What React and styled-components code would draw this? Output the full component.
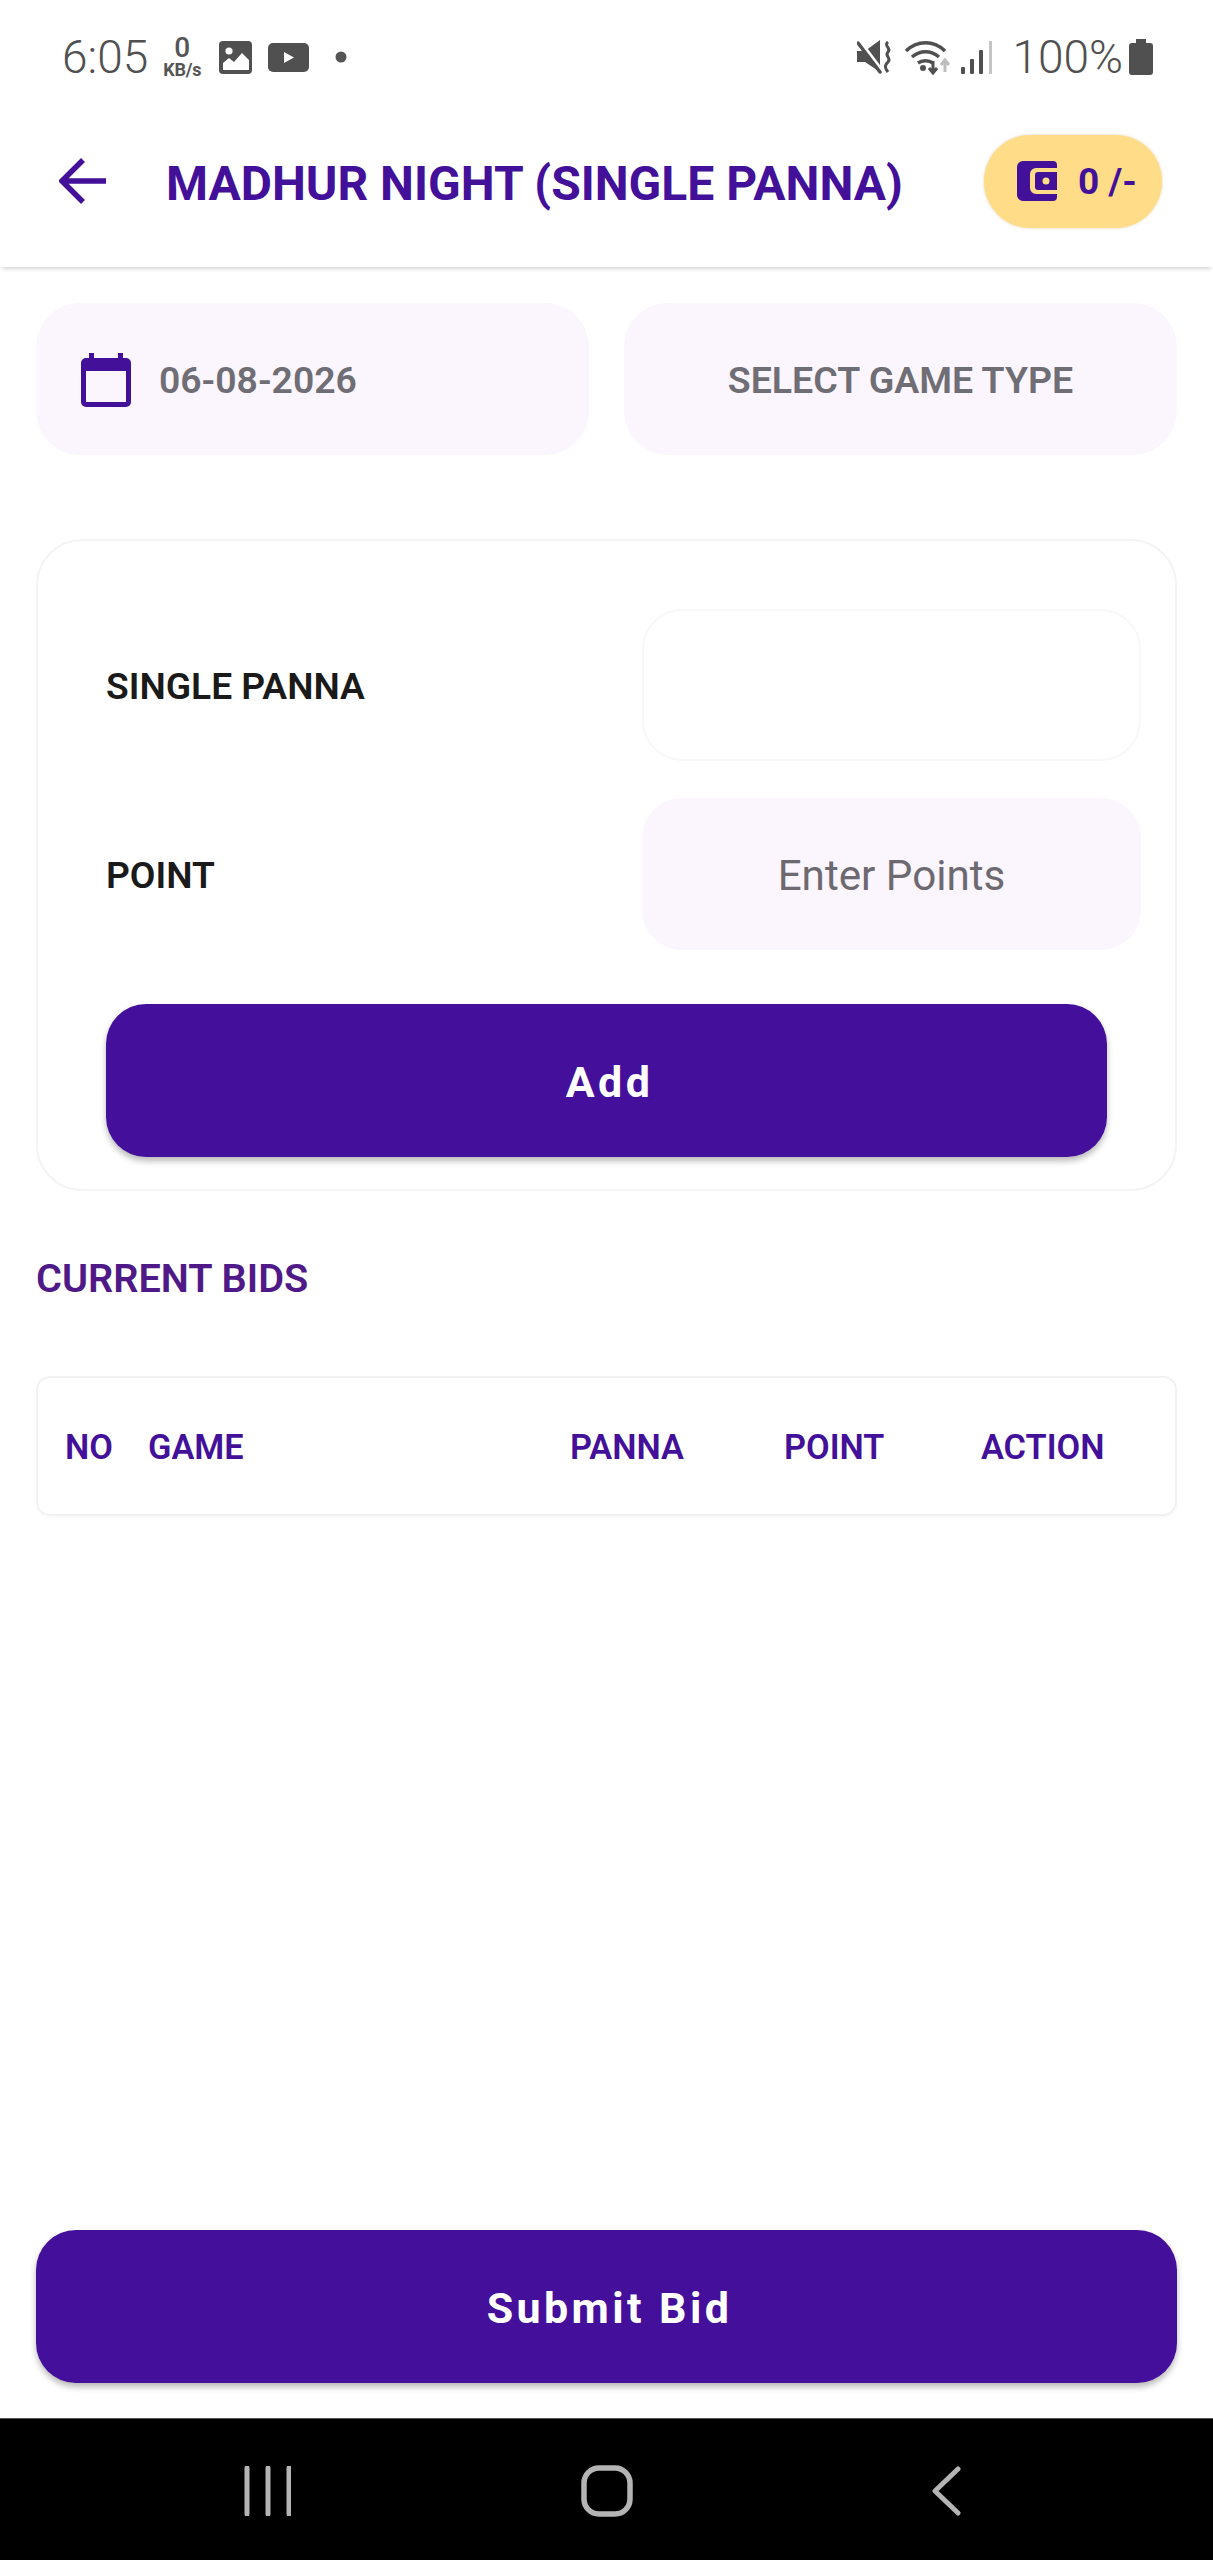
import styled, { createGlobalStyle } from "styled-components";

const PURPLE = "#43109a";

const GlobalStyle = createGlobalStyle`
  html, body {
    margin: 0;
    padding: 0;
    background: #fff;
    font-family: Roboto, "Liberation Sans", sans-serif;
  }
  * {
    box-sizing: border-box;
  }
`;

const Page = styled.div`
  width: 1213px;
  height: 2560px;
  display: flex;
  flex-direction: column;
  overflow: hidden;
  background: #fff;
`;

const StatusBar = styled.div`
  height: 115px;
  padding: 34px 60px 0 62px;
  display: flex;
  justify-content: space-between;
  align-items: flex-start;
  color: #555;
`;

const StatusGroup = styled.div`
  display: flex;
  align-items: center;
  height: 46px;
`;

const StatusText = styled.span`
  font-size: 46px;
  line-height: 46px;
  font-weight: 300;
  color: #505050;
  margin-left: ${(p) => p.$left || 0}px;
`;

const Speed = styled.div`
  width: 42px;
  margin: 0 16px 0 13px;
  display: flex;
  flex-direction: column;
  align-items: center;
  color: #555;
  font-weight: 500;
`;

const SpeedValue = styled.span`
  font-size: 28px;
  line-height: 26px;
`;

const SpeedUnit = styled.span`
  font-size: 18px;
  line-height: 18px;
  font-weight: 700;
  letter-spacing: -0.2px;
`;

const Icon = styled.svg`
  display: block;
  flex: none;
  margin-left: ${(p) => p.$left || 0}px;
`;

const Header = styled.header`
  height: 152px;
  padding: 0 51px 20px 59px;
  display: flex;
  align-items: center;
  background: #fff;
  box-shadow: 0 4px 4px -2px rgba(0, 0, 0, 0.16);
  position: relative;
`;

const Title = styled.h1`
  margin: 0 0 0 59px;
  flex: 1;
  padding-top: 5px;
  font-size: 48px;
  line-height: 60px;
  font-weight: 700;
  color: ${PURPLE};
  white-space: nowrap;
`;

const WalletPill = styled.div`
  width: 178px;
  height: 93px;
  border-radius: 47px;
  background: #ffdd88;
  box-shadow: 0 0 3px rgba(200, 170, 100, 0.5);
  display: flex;
  align-items: center;
  padding-left: 33px;
  gap: 21px;
  color: ${PURPLE};
  font-size: 37px;
  font-weight: 700;
`;

const Content = styled.main`
  flex: 1;
  padding: 36px 36px 35px;
  display: flex;
  flex-direction: column;
`;

const PillRow = styled.div`
  display: flex;
  justify-content: space-between;
`;

const Pill = styled.div`
  width: 553px;
  height: 152px;
  border-radius: 44px;
  background: #fbf5fe;
  display: flex;
  align-items: center;
  justify-content: ${(p) => (p.$center ? "center" : "flex-start")};
  padding: 2px 0 0 ${(p) => (p.$center ? 0 : 45)}px;
  gap: 28px;
  font-size: ${(p) => (p.$center ? 37.5 : 37.3)}px;
  font-weight: 600;
  color: #6f6e75;
`;

const Card = styled.section`
  margin-top: 84px;
  height: 652px;
  border: 2px solid #f5f3f6;
  border-radius: 46px;
  padding: 68px 34px 0 68px;
`;

const FormRow = styled.div`
  height: 152px;
  margin-bottom: 37px;
  display: flex;
  align-items: center;
  justify-content: space-between;
`;

const Label = styled.label`
  padding-top: 2px;
  font-size: 37.2px;
  font-weight: 600;
  color: #1a1a1a;
`;

const Field = styled.div`
  width: 499px;
  height: 152px;
  padding-top: 2px;
  border-radius: 40px;
  display: flex;
  align-items: center;
  justify-content: center;
  background: ${(p) => (p.$filled ? "#fbf5fe" : "#fff")};
  border: 2px solid ${(p) => (p.$filled ? "#fbf5fe" : "#f8f7f9")};
  font-size: 42.2px;
  color: #6d6970;
`;

const PrimaryButton = styled.button`
  display: block;
  width: ${(p) => p.$width}px;
  height: 153px;
  padding: 2px 0 0 6px;
  border: none;
  border-radius: 40px;
  background: #440f9b;
  color: #fff;
  font-family: inherit;
  font-size: 43px;
  font-weight: 700;
  letter-spacing: 3.4px;
  box-shadow: 0 4px 6px rgba(0, 0, 0, 0.28);
`;

const AddButton = styled(PrimaryButton)`
  margin-top: 54px;
`;

const SectionTitle = styled.h2`
  margin: 65px 0 0;
  height: 46px;
  font-size: 39.7px;
  line-height: 46px;
  font-weight: 600;
  color: #4f1a87;
`;

const BidsTable = styled.div`
  margin-top: 74px;
  height: 140px;
  padding: 2px 0 0 27px;
  border: 2px solid #f3f1f4;
  border-radius: 14px;
  box-shadow: 0 1px 2px rgba(0, 0, 0, 0.04);
  display: grid;
  grid-template-columns: 83px 422px 214px 197px 1fr;
  align-items: center;
  font-size: 34.3px;
  font-weight: 600;
  color: ${PURPLE};
`;

const Spacer = styled.div`
  flex: 1;
`;

const NavBar = styled.nav`
  height: 142px;
  background: #000;
  border-top: 1px solid #555;
  display: grid;
  grid-template-columns: 337px 350px 30px;
  align-items: center;
  padding: 2px 0 0 244px;
`;

const TimeIcons = () => (
  <>
    <Icon width="33" height="33" viewBox="0 0 33 33">
      <rect width="33" height="33" rx="4" fill="#505050" />
      <circle cx="10" cy="10" r="3.6" fill="#fff" />
      <path d="M4 29v-7l6-5 5 4 8-9 7 7v10z" fill="#fff" />
    </Icon>
    <Icon width="41" height="29" viewBox="0 0 41 29" $left={16}>
      <rect width="41" height="29" rx="5" fill="#505050" />
      <path d="M16 9l10 5.500-10 5.500z" fill="#fff" />
    </Icon>
    <Icon width="12" height="12" viewBox="0 0 12 12" $left={26}>
      <circle cx="6" cy="6" r="5.500" fill="#555" />
    </Icon>
  </>
);

const SystemIcons = () => (
  <>
    <Icon width="36" height="34" viewBox="0 0 36 34">
      <path d="M0 11h8L23 0v32L8 22H0z" fill="#505050" />
      <path d="M3 1l24 32" stroke="#fff" strokeWidth="3" />
      <path d="M1 3l22 29" stroke="#505050" strokeWidth="3.500" strokeLinecap="round" />
      <path d="M31 2c-5 4 4 6 0 10s4 6 0 10-3 6 0 10" stroke="#505050" strokeWidth="3" fill="none" />
    </Icon>
    <Icon width="48" height="36" viewBox="0 0 48 36" $left={11}>
      <path d="M2 12c11-11 28-11 39 0M8 18c8-7 19-7 27 0M14 24c4-3 11-3 15 0" stroke="#505050" strokeWidth="3.500" fill="none" />
      <circle cx="19" cy="29" r="3" fill="#505050" />
      <path d="M29 22v11M25 29l4 5 4-5" stroke="#505050" strokeWidth="3" fill="none" />
      <path d="M41 33V22M37 26l4-5 4 5" stroke="#bdbdbd" strokeWidth="3" fill="none" />
    </Icon>
    <Icon width="32" height="34" viewBox="0 0 32 34" $left={9}>
      <rect x="0" y="27" width="4" height="7" rx="1" fill="#505050" />
      <rect x="9" y="19" width="4" height="15" rx="1" fill="#505050" />
      <rect x="18" y="10" width="4" height="24" rx="1" fill="#505050" />
      <rect x="28" y="1" width="3" height="33" fill="#c4c4c4" />
    </Icon>
    <StatusText $left={19}>100%</StatusText>
    <Icon width="24" height="36" viewBox="0 0 24 36" $left={6}>
      <path d="M7 0h10v4h4a3 3 0 0 1 3 3v26a3 3 0 0 1-3 3H3a3 3 0 0 1-3-3V7a3 3 0 0 1 3-3h4z" fill="#505050" />
    </Icon>
  </>
);

const BackArrow = () => (
  <Icon width="48" height="46" viewBox="0 0 48 46">
    <path d="M47 23H4M24 2L3 23l21 21" stroke={PURPLE} strokeWidth="5.500" fill="none" />
  </Icon>
);

const WalletIcon = () => (
  <Icon width="40" height="40" viewBox="0 0 40 40">
    <path
      d="M6 0h30a4 4 0 0 1 4 4v3H19a6 6 0 0 0-6 6v14a6 6 0 0 0 6 6h21v3a4 4 0 0 1-4 4H6a6 6 0 0 1-6-6V6a6 6 0 0 1 6-6z"
      fill={PURPLE}
    />
    <path
      d="M21 11h19v18H21a3 3 0 0 1-3-3V14a3 3 0 0 1 3-3zm8 5.500a3.500 3.500 0 1 0 0 7 3.500 3.500 0 0 0 0-7z"
      fill={PURPLE}
      fillRule="evenodd"
    />
  </Icon>
);

const CalendarIcon = () => (
  <Icon width="50" height="54" viewBox="0 0 50 54">
    <path
      d="M8 0h5v5h24V0h5v5h3a5 5 0 0 1 5 5v39a5 5 0 0 1-5 5H5a5 5 0 0 1-5-5V10a5 5 0 0 1 5-5h3zM5 18v31h40V18z"
      fill={PURPLE}
    />
  </Icon>
);

const NavIcons = () => (
  <>
    <Icon width="47" height="50" viewBox="0 0 47 50">
      <path d="M3 2v46M24 2v46M45 2v46" stroke="#b4b4b4" strokeWidth="5" strokeLinecap="round" />
    </Icon>
    <Icon width="52" height="52" viewBox="0 0 52 52">
      <rect x="3" y="3" width="46" height="46" rx="15" stroke="#b4b4b4" strokeWidth="5.500" fill="none" />
    </Icon>
    <Icon width="30" height="50" viewBox="0 0 30 50">
      <path d="M27 3L4 25l23 22" stroke="#b4b4b4" strokeWidth="5" strokeLinecap="round" strokeLinejoin="round" fill="none" />
    </Icon>
  </>
);

export default function App() {
  return (
    <Page>
      <GlobalStyle />
      <StatusBar>
        <StatusGroup>
          <StatusText>6:05</StatusText>
          <Speed>
            <SpeedValue>0</SpeedValue>
            <SpeedUnit>KB/s</SpeedUnit>
          </Speed>
          <TimeIcons />
        </StatusGroup>
        <StatusGroup>
          <SystemIcons />
        </StatusGroup>
      </StatusBar>

      <Header>
        <BackArrow />
        <Title>MADHUR NIGHT (SINGLE PANNA)</Title>
        <WalletPill>
          <WalletIcon />
          <span>0 /-</span>
        </WalletPill>
      </Header>

      <Content>
        <PillRow>
          <Pill>
            <CalendarIcon />
            <span>06-08-2026</span>
          </Pill>
          <Pill $center>SELECT GAME TYPE</Pill>
        </PillRow>

        <Card>
          <FormRow>
            <Label>SINGLE PANNA</Label>
            <Field />
          </FormRow>
          <FormRow>
            <Label>POINT</Label>
            <Field $filled>Enter Points</Field>
          </FormRow>
          <AddButton $width={1001}>Add</AddButton>
        </Card>

        <SectionTitle>CURRENT BIDS</SectionTitle>

        <BidsTable>
          <span>NO</span>
          <span>GAME</span>
          <span>PANNA</span>
          <span>POINT</span>
          <span>ACTION</span>
        </BidsTable>

        <Spacer />
        <PrimaryButton $width={1141}>Submit Bid</PrimaryButton>
      </Content>

      <NavBar>
        <NavIcons />
      </NavBar>
    </Page>
  );
}
